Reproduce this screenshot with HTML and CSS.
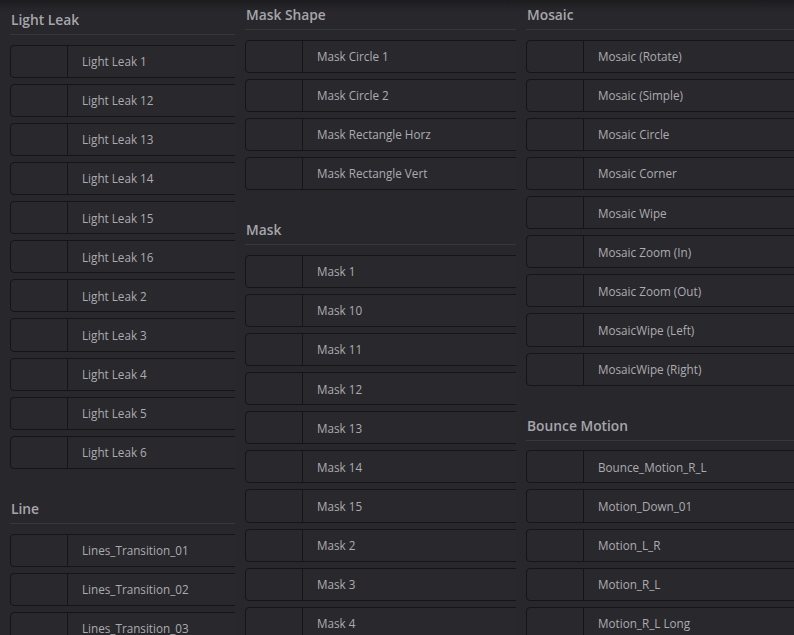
FILE: index.html
```html
<!DOCTYPE html>
<html>
<head>
<meta charset="utf-8">
<link rel="stylesheet" href="styles.css">
</head>
<body>
<div class="panel">
  <div class="col col-1">
    <section class="group">
      <h2 class="group-title">Light Leak</h2>
      <ul class="items">
        <li class="item"><span class="thumb"></span><span class="label">Light Leak 1</span></li>
        <li class="item"><span class="thumb"></span><span class="label">Light Leak 12</span></li>
        <li class="item"><span class="thumb"></span><span class="label">Light Leak 13</span></li>
        <li class="item"><span class="thumb"></span><span class="label">Light Leak 14</span></li>
        <li class="item"><span class="thumb"></span><span class="label">Light Leak 15</span></li>
        <li class="item"><span class="thumb"></span><span class="label">Light Leak 16</span></li>
        <li class="item"><span class="thumb"></span><span class="label">Light Leak 2</span></li>
        <li class="item"><span class="thumb"></span><span class="label">Light Leak 3</span></li>
        <li class="item"><span class="thumb"></span><span class="label">Light Leak 4</span></li>
        <li class="item"><span class="thumb"></span><span class="label">Light Leak 5</span></li>
        <li class="item"><span class="thumb"></span><span class="label">Light Leak 6</span></li>
      </ul>
    </section>
    <section class="group">
      <h2 class="group-title">Line</h2>
      <ul class="items">
        <li class="item"><span class="thumb"></span><span class="label">Lines_Transition_01</span></li>
        <li class="item"><span class="thumb"></span><span class="label">Lines_Transition_02</span></li>
        <li class="item"><span class="thumb"></span><span class="label">Lines_Transition_03</span></li>
      </ul>
    </section>
  </div>
  <div class="col col-2">
    <section class="group">
      <h2 class="group-title">Mask Shape</h2>
      <ul class="items">
        <li class="item"><span class="thumb"></span><span class="label">Mask Circle 1</span></li>
        <li class="item"><span class="thumb"></span><span class="label">Mask Circle 2</span></li>
        <li class="item"><span class="thumb"></span><span class="label">Mask Rectangle Horz</span></li>
        <li class="item"><span class="thumb"></span><span class="label">Mask Rectangle Vert</span></li>
      </ul>
    </section>
    <section class="group">
      <h2 class="group-title">Mask</h2>
      <ul class="items">
        <li class="item"><span class="thumb"></span><span class="label">Mask 1</span></li>
        <li class="item"><span class="thumb"></span><span class="label">Mask 10</span></li>
        <li class="item"><span class="thumb"></span><span class="label">Mask 11</span></li>
        <li class="item"><span class="thumb"></span><span class="label">Mask 12</span></li>
        <li class="item"><span class="thumb"></span><span class="label">Mask 13</span></li>
        <li class="item"><span class="thumb"></span><span class="label">Mask 14</span></li>
        <li class="item"><span class="thumb"></span><span class="label">Mask 15</span></li>
        <li class="item"><span class="thumb"></span><span class="label">Mask 2</span></li>
        <li class="item"><span class="thumb"></span><span class="label">Mask 3</span></li>
        <li class="item"><span class="thumb"></span><span class="label">Mask 4</span></li>
      </ul>
    </section>
  </div>
  <div class="col col-3">
    <section class="group">
      <h2 class="group-title">Mosaic</h2>
      <ul class="items">
        <li class="item"><span class="thumb"></span><span class="label">Mosaic (Rotate)</span></li>
        <li class="item"><span class="thumb"></span><span class="label">Mosaic (Simple)</span></li>
        <li class="item"><span class="thumb"></span><span class="label">Mosaic Circle</span></li>
        <li class="item"><span class="thumb"></span><span class="label">Mosaic Corner</span></li>
        <li class="item"><span class="thumb"></span><span class="label">Mosaic Wipe</span></li>
        <li class="item"><span class="thumb"></span><span class="label">Mosaic Zoom (In)</span></li>
        <li class="item"><span class="thumb"></span><span class="label">Mosaic Zoom (Out)</span></li>
        <li class="item"><span class="thumb"></span><span class="label">MosaicWipe (Left)</span></li>
        <li class="item"><span class="thumb"></span><span class="label">MosaicWipe (Right)</span></li>
      </ul>
    </section>
    <section class="group">
      <h2 class="group-title">Bounce Motion</h2>
      <ul class="items">
        <li class="item"><span class="thumb"></span><span class="label">Bounce_Motion_R_L</span></li>
        <li class="item"><span class="thumb"></span><span class="label">Motion_Down_01</span></li>
        <li class="item"><span class="thumb"></span><span class="label">Motion_L_R</span></li>
        <li class="item"><span class="thumb"></span><span class="label">Motion_R_L</span></li>
        <li class="item"><span class="thumb"></span><span class="label">Motion_R_L Long</span></li>
      </ul>
    </section>
  </div>
</div>
</body>
</html>
```

FILE: styles.css
```css
html, body {
  margin: 0;
  padding: 0;
  height: 100%;
  overflow: hidden;
}

body {
  background: linear-gradient(#1c1c1f 0px, #252428 8px, #28272c 14px, #28272c 100%);
  font-family: "Open Sans", "Noto Sans", "DejaVu Sans", sans-serif;
  color: #aaaaae;
}

.panel {
  display: flex;
  gap: 10px;
  padding-left: 10px;
  height: 100%;
}

.col {
  overflow: hidden;
  padding-top: 5px;
  display: flex;
  flex-direction: column;
  gap: 30px;
}

.col-1 {
  width: 225px;
  padding-top: 10px;
}

.col-2 {
  width: 271px;
}

.col-3 {
  flex: 1;
}

.group-title {
  margin: 0 0 9.5px 0;
  padding: 0 0 4px 1px;
  font-size: 13.8px;
  font-weight: 600;
  line-height: 20px;
  color: #a6a6aa;
  border-bottom: 1px solid #38373c;
}

.items {
  list-style: none;
  margin: 0;
  padding: 0;
  display: flex;
  flex-direction: column;
  gap: 6px;
}

.item {
  display: flex;
  align-items: center;
  height: 31.15px;
  width: calc(100% + 40px);
  border: 1px solid #151518;
  border-radius: 4px;
  background: #29282d;
  box-sizing: content-box;
}

.thumb {
  width: 56px;
  height: 100%;
  border-right: 1px solid #151518;
  flex: none;
}

.label {
  padding-left: 14px;
  font-size: 11.7px;
  color: #acacb0;
  white-space: nowrap;
}
```
